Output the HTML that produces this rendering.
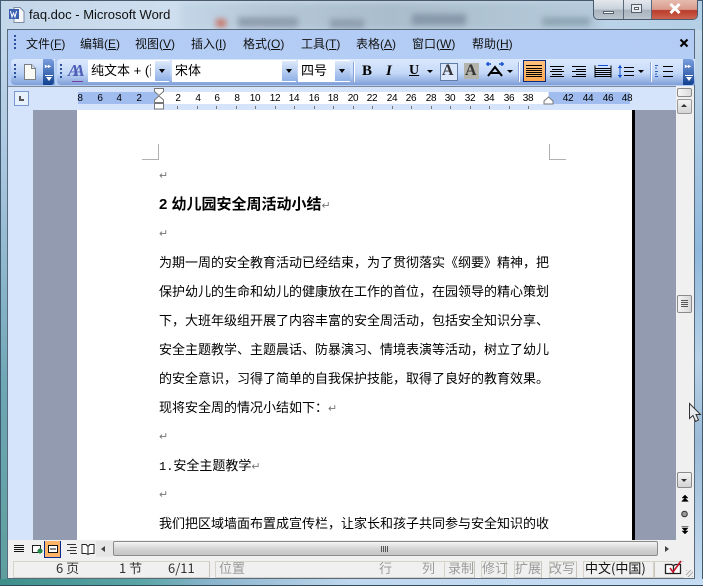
<!DOCTYPE html>
<html><head><meta charset="utf-8">
<style>
html,body{margin:0;padding:0}
body{width:703px;height:586px;position:relative;overflow:hidden;font-family:"Liberation Sans","WenQuanYi Zen Hei",sans-serif;background:#b9d2ea}
.a{position:absolute}
.t{position:absolute;white-space:nowrap;line-height:16px;color:#000}
.m{font-size:12px;top:36px;color:#111}
.m u{text-decoration:underline}
.b{position:absolute;white-space:nowrap;font-family:"WenQuanYi Zen Hei","Noto Sans CJK SC",sans-serif;font-size:13px;line-height:16px;color:#000;left:159px}
.r{position:absolute;top:93px;font:10px/11px "Liberation Sans",sans-serif;color:#000;width:16px;text-align:center;letter-spacing:-.3px}
.tk{position:absolute;top:106px;width:1px;height:3px;background:#777}
.p{position:absolute;left:159px;font-size:11px;color:#777;line-height:12px}
.dots{position:absolute;width:2px;height:15px;background:repeating-linear-gradient(#2c4f9e 0 2px,transparent 2px 4px)}
.dd{position:absolute;width:15px;height:20px;background:linear-gradient(#dde9fb,#8fb0e8);top:61px}
.dd:after{content:"";position:absolute;left:4px;top:8px;border:3px solid transparent;border-top:4px solid #000;border-bottom:0}
.sb{position:absolute;top:560px;font-size:13px;line-height:16px;color:#333;white-space:nowrap;font-family:"WenQuanYi Zen Hei","Noto Sans CJK SC",sans-serif}
.g{color:#9a9a9a}
.box{position:absolute;top:561px;height:15px;border:1px solid #d6d3c8;border-right-color:#c8c6bc;box-sizing:content-box}
</style></head><body>
<!-- glass -->
<div class="a" style="left:0;top:0;width:703px;height:586px;background:linear-gradient(90deg,#c3d7ea,#d0e0f0 30%,#c4d8ea 70%,#b3cfe6)"></div>
<div class="a" style="left:180px;top:2px;width:420px;height:28px;background:linear-gradient(90deg,#c3d6e8,#b6c8d8 20%,#a9bdcc 50%,#b5cadb 100%);filter:blur(3px)"></div>
<div class="a" style="left:238px;top:17px;width:60px;height:10px;background:#8f9eb0;filter:blur(3px)"></div>
<div class="a" style="left:330px;top:19px;width:34px;height:9px;background:#8f9eb0;filter:blur(3px)"></div>
<div class="a" style="left:412px;top:14px;width:54px;height:11px;background:#8698ab;filter:blur(3px)"></div>
<div class="a" style="left:542px;top:17px;width:48px;height:9px;background:#8fa6b6;filter:blur(3px)"></div>
<div class="a" style="left:216px;top:19px;width:10px;height:8px;background:#c9776a;filter:blur(3px)"></div>
<div class="a" style="left:0;top:0;width:703px;height:1px;background:#4a5a6a"></div>
<div class="a" style="left:0;top:0;width:1px;height:586px;background:#3e5a72"></div>
<div class="a" style="left:702px;top:0;width:1px;height:586px;background:#3e5a72"></div>
<div class="a" style="left:1px;top:30px;width:6px;height:550px;background:linear-gradient(#c3d7ea,#a9c6df 25%,#6ea6b4 65%,#5e9f9e)"></div>
<div class="a" style="left:695px;top:30px;width:7px;height:550px;background:linear-gradient(#c4d8ea,#8fb8dc 40%,#b8d2e8 60%,#9bbad6 75%,#c5dcf0)"></div>
<div class="a" style="left:0;top:579px;width:703px;height:7px;background:linear-gradient(90deg,#3e8f8c,#5aa5a5 20%,#8ab4cc 30%,#c0d8ee 50%,#c6dcf2)"></div>
<div class="a" style="left:0;top:585px;width:703px;height:1px;background:#33495c"></div>
<!-- title -->
<svg class="a" style="left:8px;top:6px" width="17" height="18" viewBox="0 0 17 18"><path d="M6 1.500h6l4 4v11H6z" fill="#f4f6fa" stroke="#7d8ca4"/><rect x="1" y="3" width="10" height="10" fill="#3a5fb0"/><path d="M2.500 5l1.500 6 1.500-4 1.500 4 1.500-6" fill="none" stroke="#fff"/></svg>
<div class="t" style="left:29px;top:7px;font-size:13px;color:#111">faq.doc - Microsoft Word</div>
<!-- window controls -->
<div class="a" style="left:593px;top:0;width:105px;height:20px;border:1px solid #4a5a6a;border-top:0;border-radius:0 0 5px 5px;box-sizing:border-box;overflow:hidden;background:linear-gradient(#e4e8ee,#c8d0da 50%,#a7b2bd 52%,#bcc6d0)">
<div class="a" style="left:29px;top:0;width:1px;height:20px;background:#5a6a7a"></div>
<div class="a" style="left:57px;top:0;width:1px;height:20px;background:#5a6a7a"></div>
<div class="a" style="left:58px;top:0;width:46px;height:20px;background:linear-gradient(#e6bcb0,#d8998a 48%,#b9392a 52%,#cf6a56)"></div>
<div class="a" style="left:9px;top:11px;width:11px;height:3px;background:#fff;border:1px solid #55606c;box-sizing:border-box"></div>
<div class="a" style="left:37px;top:4px;width:11px;height:9px;border:1px solid #555f6b;background:#e8ecf0;box-sizing:border-box"></div>
<div class="a" style="left:40px;top:7px;width:5px;height:3px;border:1px solid #555f6b;background:#fff;box-sizing:border-box"></div>
<svg class="a" style="left:75px;top:3px" width="12" height="11"><path d="M1.500 1l9 9M10.500 1l-9 9" stroke="#fff" stroke-width="3"/></svg>
</div>
<!-- client frame -->
<div class="a" style="left:7px;top:29px;width:688px;height:550px;background:#f0f0f0;border:1px solid #586a7c;box-sizing:border-box"></div>
<!-- menu bar -->
<div class="a" style="left:8px;top:30px;width:686px;height:28px;background:linear-gradient(#b3ccf5,#b4cdf4)"></div>
<div class="dots" style="left:14px;top:35px;height:15px"></div>
<div class="t m" style="left:26px">文件(<u>F</u>)</div>
<div class="t m" style="left:80px">编辑(<u>E</u>)</div>
<div class="t m" style="left:135px">视图(<u>V</u>)</div>
<div class="t m" style="left:191px">插入(<u>I</u>)</div>
<div class="t m" style="left:243px">格式(<u>O</u>)</div>
<div class="t m" style="left:301px">工具(<u>T</u>)</div>
<div class="t m" style="left:356px">表格(<u>A</u>)</div>
<div class="t m" style="left:412px">窗口(<u>W</u>)</div>
<div class="t m" style="left:472px">帮助(<u>H</u>)</div>
<svg class="a" style="left:679px;top:38px" width="11" height="11"><path d="M1.500 1.500l7 7M8.500 1.500l-7 7" stroke="#000" stroke-width="2"/></svg>
<!-- toolbar row -->
<div class="a" style="left:8px;top:58px;width:686px;height:28px;background:#b4cdf4"></div>
<div class="a" style="left:11px;top:59px;width:44px;height:26px;border-radius:4px 0 0 4px;background:linear-gradient(#dce9fc,#b9d1f6 55%,#7f9fd8)"></div>
<div class="a" style="left:43px;top:59px;width:11px;height:26px;border-radius:0 3px 3px 0;background:linear-gradient(#7b9fe0,#11408f)"></div>
<div class="a" style="left:45px;top:64px;color:#fff;font:bold 6px/6px 'Liberation Sans',sans-serif">▸▸</div>
<div class="a" style="left:45px;top:75px;width:8px;height:1px;background:#fff"></div>
<div class="a" style="left:46px;top:77px;border:3px solid transparent;border-top:4px solid #fff;border-bottom:0"></div>
<div class="a" style="left:57px;top:59px;width:638px;height:26px;background:linear-gradient(#dce9fc,#c3d8f8 55%,#7f9fd8);border-radius:4px 0 0 4px"></div>
<div class="a" style="left:683px;top:59px;width:11px;height:26px;border-radius:0 3px 3px 0;background:linear-gradient(#7b9fe0,#11408f)"></div>
<div class="a" style="left:685px;top:64px;color:#fff;font:bold 6px/6px 'Liberation Sans',sans-serif">▸▸</div>
<div class="a" style="left:685px;top:75px;width:8px;height:1px;background:#fff"></div>
<div class="a" style="left:686px;top:77px;border:3px solid transparent;border-top:4px solid #fff;border-bottom:0"></div>
<div class="dots" style="left:14px;top:64px"></div>
<div class="dots" style="left:60px;top:64px"></div>
<svg class="a" style="left:23px;top:63px" width="14" height="18"><path d="M1.500 1.500h7l4 4v11h-11z" fill="#fbfbf6" stroke="#7a7f88"/><path d="M8.500 1.500v4h4" fill="#d8dce4" stroke="#7a7f88"/></svg>
<div class="t" style="left:68px;top:62px;font:italic bold 17px/18px 'Liberation Serif',serif;color:#4e5fb8;letter-spacing:-6px">AA</div>
<div class="a" style="left:72px;top:81px;width:11px;height:1px;background:#7a3fa0"></div>
<!-- style combo -->
<div class="a" style="left:88px;top:60px;width:81px;height:22px;background:#fff"></div>
<div class="t" style="left:91px;top:63px;font-size:13px;width:60px;overflow:hidden;height:16px;font-family:'WenQuanYi Zen Hei',sans-serif">纯文本 + (西</div>
<div class="dd" style="left:155px;top:61px;height:20px"></div>
<div class="a" style="left:172px;top:60px;width:124px;height:22px;background:#fff"></div>
<div class="t" style="left:175px;top:63px;font-size:13px;font-family:'WenQuanYi Zen Hei',sans-serif">宋体</div>
<div class="dd" style="left:282px"></div>
<div class="a" style="left:298px;top:60px;width:52px;height:22px;background:#fff"></div>
<div class="t" style="left:301px;top:63px;font-size:13px;font-family:'WenQuanYi Zen Hei',sans-serif">四号</div>
<div class="dd" style="left:335px"></div>
<div class="a" style="left:353px;top:62px;width:1px;height:20px;background:#8aa6d8;box-shadow:1px 0 0 #fff"></div>
<div class="t" style="left:362px;top:62px;font:bold 15px/18px 'Liberation Serif',serif">B</div>
<div class="t" style="left:386px;top:62px;font:italic bold 15px/18px 'Liberation Serif',serif">I</div>
<div class="t" style="left:409px;top:62px;font:bold 14px/18px 'Liberation Serif',serif;text-decoration:underline">U</div>
<div class="a" style="left:427px;top:70px;border:3px solid transparent;border-top:3px solid #000;border-bottom:0"></div>
<div class="a" style="left:440px;top:63px;width:16px;height:16px;background:#d9e6fb;border:1px solid #5f7fa8"></div>
<div class="t" style="left:442px;top:62px;font:bold 16px/18px 'Liberation Serif',serif;color:#333">A</div>
<div class="a" style="left:464px;top:63px;width:15px;height:16px;background:#b4b4ac"></div>
<div class="t" style="left:465px;top:62px;font:bold 16px/18px 'Liberation Serif',serif;color:#333">A</div>
<svg class="a" style="left:485px;top:61px" width="20" height="18"><path d="M3 15L10 6l7 9M6 12h8" fill="none" stroke="#000" stroke-width="2"/><path d="M1 3h5M3 1v4M14 3h5M17 1v4" stroke="#1450d0" stroke-width="1.500"/></svg>
<div class="a" style="left:507px;top:70px;border:3px solid transparent;border-top:3px solid #000;border-bottom:0"></div>
<div class="a" style="left:518px;top:62px;width:1px;height:20px;background:#8aa6d8;box-shadow:1px 0 0 #fff"></div>
<div class="a" style="left:523px;top:60px;width:23px;height:22px;background:linear-gradient(#ffc27c,#ffa850);border:1px solid #0a2a80;box-sizing:border-box"></div>
<svg class="a" style="left:526px;top:64px" width="170" height="15" shape-rendering="crispEdges">
<g stroke="#000"><path d="M0 1.500h16M0 4.500h16M0 6.500h16M0 8.500h16M0 10.500h16M0 12.500h16"/>
<path d="M24 2.500h14M26 5.500h10M24 7.500h14M26 10.500h10M24 12.500h14"/>
<path d="M46 2.500h14M50 5.500h10M46 7.500h14M50 10.500h10M46 12.500h14"/>
<path d="M69 1.500v12M85 1.500v12M69 4.500h16M69 6.500h16M69 8.500h16M69 10.500h16M69 12.500h16"/>
<path d="M98 3.500h10M98 7.500h10M98 11.500h10"/>
<path d="M137 2.500h10M137 7.500h10M137 12.500h10"/></g>
<path d="M72 1.500h10" stroke="#1450d0"/>
<path d="M94 1v13" stroke="#1450d0"/><path d="M92 3.500h4M93 2.500h2M92 11.500h4M93 12.500h2" stroke="#1450d0"/>
<path d="M129 1.500h3M129 7.500h3M129 12.500h3M130 3v2M130 9v2" stroke="#2a60c0"/>
</svg>
<div class="a" style="left:638px;top:70px;border:3px solid transparent;border-top:3px solid #000;border-bottom:0"></div>
<div class="a" style="left:650px;top:62px;width:1px;height:20px;background:#8aa6d8;box-shadow:1px 0 0 #fff"></div>
<!-- ruler -->
<div class="a" style="left:8px;top:86px;width:686px;height:24px;background:#d5e4fb;border-top:1px solid #7f8a96;box-sizing:border-box"></div>
<div class="a" style="left:14px;top:91px;width:13px;height:13px;border:1px solid #7a9ad2;background:#e7f0fd"></div>
<div class="a" style="left:19px;top:96px;width:5px;height:5px;border-left:2px solid #555;border-bottom:2px solid #555;box-sizing:border-box"></div>
<div class="a" style="left:78px;top:92px;width:80px;height:12px;background:#a1bdf0"></div>
<div class="a" style="left:158px;top:92px;width:390px;height:12px;background:#fff"></div>
<div class="a" style="left:549px;top:92px;width:81px;height:12px;background:#a1bdf0"></div>
<div class="r" style="left:72px">8</div><div class="r" style="left:92px">6</div><div class="r" style="left:111px">4</div><div class="r" style="left:131px">2</div>
<div class="r" style="left:170px">2</div><div class="r" style="left:190px">4</div><div class="r" style="left:209px">6</div><div class="r" style="left:229px">8</div>
<div class="r" style="left:247px">10</div><div class="r" style="left:267px">12</div><div class="r" style="left:286px">14</div><div class="r" style="left:306px">16</div><div class="r" style="left:325px">18</div><div class="r" style="left:345px">20</div><div class="r" style="left:364px">22</div><div class="r" style="left:384px">24</div><div class="r" style="left:403px">26</div><div class="r" style="left:423px">28</div><div class="r" style="left:442px">30</div><div class="r" style="left:462px">32</div><div class="r" style="left:481px">34</div><div class="r" style="left:501px">36</div><div class="r" style="left:520px">38</div>
<div class="r" style="left:560px">42</div><div class="r" style="left:580px">44</div><div class="r" style="left:600px">46</div><div class="r" style="left:619px">48</div>
<div class="tk" style="left:177px"></div><div class="tk" style="left:197px"></div><div class="tk" style="left:216px"></div><div class="tk" style="left:236px"></div><div class="tk" style="left:255px"></div><div class="tk" style="left:275px"></div><div class="tk" style="left:294px"></div><div class="tk" style="left:314px"></div><div class="tk" style="left:333px"></div><div class="tk" style="left:353px"></div><div class="tk" style="left:372px"></div><div class="tk" style="left:392px"></div><div class="tk" style="left:411px"></div><div class="tk" style="left:431px"></div><div class="tk" style="left:450px"></div><div class="tk" style="left:470px"></div><div class="tk" style="left:489px"></div><div class="tk" style="left:509px"></div><div class="tk" style="left:528px"></div>
<svg class="a" style="left:153px;top:88px" width="12" height="22"><path d="M1.500 .5h9v3l-4.500 4-4.500-4zM6 8l4.500 4v2.500h-9V12zM1.500 15.500h9v5.500h-9z" fill="#fff" stroke="#777"/></svg>
<svg class="a" style="left:543px;top:95px" width="11" height="10"><path d="M1 9V6l4.500-4L10 6v3z" fill="#fff" stroke="#777"/></svg>
<!-- doc area -->
<div class="a" style="left:8px;top:110px;width:25px;height:430px;background:#d5e4fb"></div>
<div class="a" style="left:33px;top:110px;width:44px;height:430px;background:#939bb0"></div>
<div class="a" style="left:77px;top:110px;width:555px;height:430px;background:#fff"></div>
<div class="a" style="left:632px;top:110px;width:3px;height:430px;background:#000"></div>
<div class="a" style="left:635px;top:110px;width:41px;height:430px;background:#939bb0"></div>
<!-- crop marks -->
<div class="a" style="left:142px;top:144px;width:17px;height:16px;border-right:1px solid #b0b0b0;border-bottom:1px solid #b0b0b0;box-sizing:border-box"></div>
<div class="a" style="left:549px;top:144px;width:17px;height:16px;border-left:1px solid #b0b0b0;border-bottom:1px solid #b0b0b0;box-sizing:border-box"></div>
<!-- text -->
<div class="p" style="top:170px">↵</div>
<div class="t" style="left:159px;top:197px;font-size:15px;font-weight:700;color:#000;font-family:'Liberation Sans','Noto Sans CJK SC',sans-serif">2 幼儿园安全周活动小结<span style="font-size:11px;color:#777;font-weight:400">↵</span></div>
<div class="p" style="top:228px">↵</div>
<div class="b" style="top:254px">为期一周的安全教育活动已经结束，为了贯彻落实《纲要》精神，把</div>
<div class="b" style="top:283px">保护幼儿的生命和幼儿的健康放在工作的首位，在园领导的精心策划</div>
<div class="b" style="top:312px">下，大班年级组开展了内容丰富的安全周活动，包括安全知识分享、</div>
<div class="b" style="top:341px">安全主题教学、主题晨话、防暴演习、情境表演等活动，树立了幼儿</div>
<div class="b" style="top:370px">的安全意识，习得了简单的自我保护技能，取得了良好的教育效果。</div>
<div class="b" style="top:399px">现将安全周的情况小结如下：<span style="font-size:11px;color:#777">↵</span></div>
<div class="p" style="top:431px">↵</div>
<div class="b" style="top:457px"><span style="font:12px/16px 'Liberation Mono',monospace">1.</span>安全主题教学<span style="font-size:11px;color:#777">↵</span></div>
<div class="p" style="top:489px">↵</div>
<div class="b" style="top:515px">我们把区域墙面布置成宣传栏，让家长和孩子共同参与安全知识的收</div>
<!-- vertical scrollbar -->
<div class="a" style="left:676px;top:86px;width:18px;height:454px;background:#f0f0f0"></div>
<div class="a" style="left:677px;top:88px;width:15px;height:9px;background:linear-gradient(90deg,#f6f6f6,#dcdcdc);border:1px solid #8a8a8a;border-radius:2px;box-sizing:border-box"></div>
<div class="a" style="left:677px;top:99px;width:15px;height:15px;background:linear-gradient(#f4f4f4,#d4d4d4);border:1px solid #9a9a9a;border-radius:2px;box-sizing:border-box"></div>
<div class="a" style="left:681px;top:104px;border:3px solid transparent;border-bottom:3px solid #333;border-top:0"></div>
<div class="a" style="left:677px;top:295px;width:15px;height:18px;background:linear-gradient(90deg,#f4f4f4,#d8d8d8);border:1px solid #8a8a8a;border-radius:2px;box-sizing:border-box"></div>
<div class="a" style="left:681px;top:300px;width:7px;height:7px;background:repeating-linear-gradient(#555 0 1px,transparent 1px 2px)"></div>
<div class="a" style="left:677px;top:472px;width:15px;height:16px;background:linear-gradient(#f4f4f4,#d4d4d4);border:1px solid #8a8a8a;border-radius:2px;box-sizing:border-box"></div>
<div class="a" style="left:681px;top:479px;border:3px solid transparent;border-top:3px solid #333;border-bottom:0"></div>
<svg class="a" style="left:680px;top:494px" width="10" height="42"><path d="M5 1L2 4h6zM5 4L2 7h6zM1.500 7.500h7" fill="#000" stroke="#000" stroke-width=".5"/><circle cx="4.500" cy="20" r="2.800" fill="#999" stroke="#333"/><path d="M1.500 32.500h7M5 37l-3-3h6zM5 40l-3-3h6z" fill="#000" stroke="#000" stroke-width=".5"/></svg>
<!-- horizontal bar -->
<div class="a" style="left:8px;top:540px;width:686px;height:18px;background:#f0f0f0"></div>
<svg class="a" style="left:12px;top:541px" width="100" height="17" shape-rendering="crispEdges">
<path d="M2 4.500h10M2 6.500h10M2 8.500h10M2 10.500h10" stroke="#111"/>
<rect x="20.500" y="4.500" width="8" height="7" fill="#fff" stroke="#222"/><circle cx="28" cy="10" r="2.500" fill="#2a8a4a"/>
<rect x="32.500" y="-.5" width="16" height="17" fill="#ffb468" stroke="#0a2a90"/><rect x="36.500" y="4.500" width="9" height="7" fill="#fff" stroke="#111"/><path d="M38 8h6" stroke="#111"/>
<path d="M55 3.500h9M58 6.500h7M55 9.500h9M58 12.500h7" stroke="#333"/>
<path d="M70 3.500h4l2 2 2-2h4v9h-4l-2 1-2-1h-4zM76 5v8" fill="#fff" stroke="#222"/>
</svg>
<div class="a" style="left:96px;top:541px;width:17px;height:16px;background:#e6e6e6"></div>
<div class="a" style="left:101px;top:546px;border:3px solid transparent;border-right:4px solid #444;border-left:0"></div>
<div class="a" style="left:113px;top:541px;width:545px;height:15px;background:linear-gradient(#f4f4f4,#d0d0d0 60%,#c6c6c6);border:1px solid #8a8a8a;border-radius:2px;box-sizing:border-box"></div>
<div class="a" style="left:381px;top:546px;width:7px;height:6px;background:repeating-linear-gradient(90deg,#555 0 1px,transparent 1px 2px)"></div>
<div class="a" style="left:665px;top:546px;border:3px solid transparent;border-left:4px solid #444;border-right:0"></div>
<!-- status bar -->
<div class="a" style="left:8px;top:558px;width:686px;height:20px;background:#f0f0f0"></div>
<div class="box" style="left:13px;width:195px"></div>
<div class="box" style="left:215px;width:228px"></div>
<div class="box" style="left:444px;width:29px"></div>
<div class="box" style="left:481px;width:24px"></div><div class="box" style="left:514px;width:26px"></div><div class="box" style="left:549px;width:26px"></div><div class="box" style="left:583px;width:70px"></div><div class="box" style="left:653px;width:30px;border-right:0"></div>
<div class="sb" style="left:56px">6 页</div>
<div class="sb" style="left:119px">1 节</div>
<div class="sb" style="left:168px">6/11</div>
<div class="sb g" style="left:219px">位置</div>
<div class="sb g" style="left:379px">行</div>
<div class="sb g" style="left:422px">列</div>
<div class="sb g" style="left:448px">录制</div>
<div class="sb g" style="left:482px">修订</div>
<div class="sb g" style="left:515px">扩展</div>
<div class="sb g" style="left:549px">改写</div>
<div class="sb" style="left:585px;color:#111">中文(中国)</div>
<svg class="a" style="left:663px;top:560px" width="22" height="16"><path d="M2.500 4.500h6l2 1 2-1h5v9h-15zM10.500 5.500v8" fill="#fff" stroke="#222" stroke-width="1.300"/><path d="M7 8l3 4 8-11" fill="none" stroke="#c0182a" stroke-width="1.600"/></svg>
<div class="a" style="left:686px;top:570px;width:7px;height:7px;background:repeating-linear-gradient(135deg,#b0b0b0 0 1px,transparent 1px 3px)"></div>
<!-- cursor -->
<svg class="a" style="left:688px;top:402px" width="14" height="22"><path d="M1.500 1.500v15l3.500-3 2.500 6 3-1.500-2.500-5.500H12.500z" fill="#e8eaee" stroke="#333"/></svg>
</body></html>
